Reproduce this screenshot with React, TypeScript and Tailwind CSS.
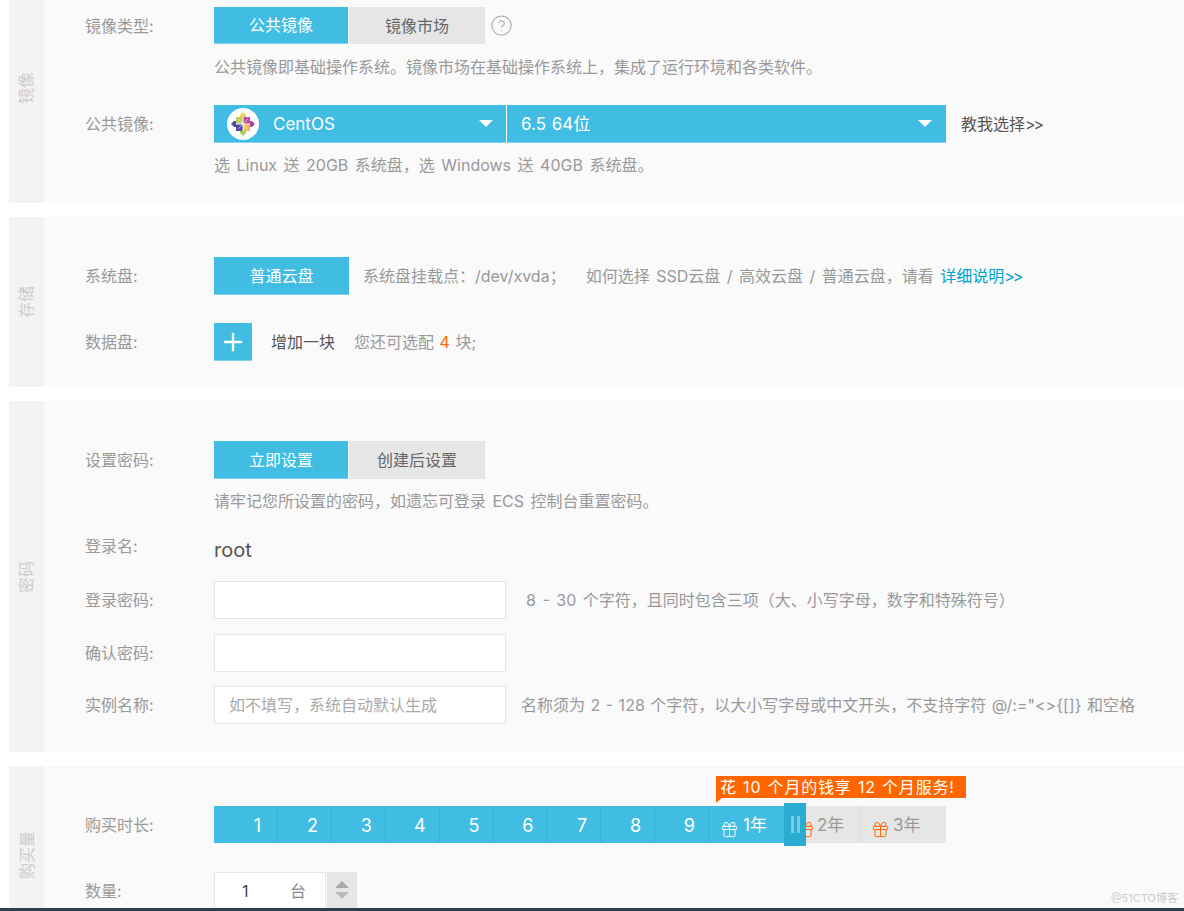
import { CircleHelp, Gift, Plus } from "lucide-react";
import type { ReactNode } from "react";

const Row = ({ label, className, children }: { label: string; className: string; children: ReactNode }) => (
  <div className={`flex items-center ${className}`}>
    <div className="w-[129px] shrink-0 text-[#999]">{label}</div>
    {children}
  </div>
);

const Hint = ({ className, children }: { className: string; children: ReactNode }) => (
  <div className={`ml-[129px] h-6 whitespace-nowrap leading-6 text-[#999] [word-spacing:2px] ${className}`}>{children}</div>
);

const Section = ({ title, tabClass, className, children }: { title: string; tabClass: string; className: string; children: ReactNode }) => (
  <section className={`flex overflow-hidden bg-[#fafafa] ${className}`}>
    <div className={`flex w-[35px] shrink-0 items-center justify-center bg-[#f3f3f3] text-[#ccc] ${tabClass}`}>
      <span className="-rotate-90 whitespace-nowrap">{title}</span>
    </div>
    <div className="min-w-0 flex-1 pl-[41px]">{children}</div>
  </section>
);

const Btn = ({ on, className, children }: { on?: boolean; className: string; children: ReactNode }) => (
  <div className={`flex items-center justify-center ${on ? "border-b border-[#7fd3ee] bg-[#41bde4] text-white" : "bg-[#e6e6e6] text-[#666]"} ${className}`}>
    {children}
  </div>
);

const Caret = () => <span className="h-0 w-0 border-x-[7px] border-t-[7px] border-x-transparent border-t-white" />;

const Arrows = () => <span className="tracking-[-2px]">&gt;&gt;</span>;

const CentosLogo = () => (
  <svg viewBox="0 0 32 32" className="h-8 w-8">
    <circle cx="16" cy="16" r="16" fill="#fff" />
    <path d="M16 4l3 3v2h-6V7z" fill="#e9d25a" />
    <path d="M28 16l-3 3h-2v-6h2z" fill="#a9479c" />
    <path d="M16 28l-3-3v-2h6v2z" fill="#a8cf55" />
    <path d="M4 16l3-3h2v6H7z" fill="#5a4aa8" />
    <rect x="9" y="9" width="6.5" height="6.5" fill="#b9cf5a" />
    <rect x="16.5" y="9" width="6.5" height="6.5" fill="#bb4c9d" />
    <rect x="9" y="16.5" width="6.5" height="6.5" fill="#4a4aa6" />
    <rect x="16.5" y="16.5" width="6.5" height="6.5" fill="#f4b757" />
    <path d="M11 11l9 10M21 11l-10 10" stroke="#fff" strokeWidth="0.8" opacity="0.7" />
  </svg>
);

const months = [1, 2, 3, 4, 5, 6, 7, 8, 9];

export default function App() {
  return (
    <div
      className="relative h-[911px] w-[1184px] overflow-hidden bg-white pl-[9px] text-[16px] [word-spacing:1px]"
      style={{ fontFamily: 'Inter, "Noto Sans CJK SC", sans-serif' }}
    >
      <Section title="镜像" tabClass="pb-[28px]" className="h-[203px]">
        <Row label="镜像类型:" className="mt-[7px] h-[37px]">
          <Btn on className="h-full w-[134px]">公共镜像</Btn>
          <Btn className="ml-[1px] h-full w-[136px]">镜像市场</Btn>
          <CircleHelp className="ml-[5px] h-[23px] w-[23px] text-[#aaa]" strokeWidth={1.1} />
        </Row>
        <Hint className="mt-[11px]">公共镜像即基础操作系统。镜像市场在基础操作系统上&#xFF0C;集成了运行环境和各类软件。</Hint>
        <Row label="公共镜像:" className="mt-[26px] h-[38px]">
          <div className="flex h-full w-[292px] items-center border-b border-[#7fd3ee] bg-[#41bde4] px-[13px] text-white">
            <CentosLogo />
            <span className="ml-[14px] mt-[2px] flex-1 text-[17px]">CentOS</span>
            <Caret />
          </div>
          <div className="ml-[1px] flex h-full w-[439px] items-center border-b border-[#7fd3ee] bg-[#41bde4] px-[14px] text-white">
            <span className="mt-[2px] flex-1 text-[17px]">6.5 64位</span>
            <Caret />
          </div>
          <span className="ml-[15px] text-[#555]">教我选择<Arrows /></span>
        </Row>
        <Hint className="mt-[10px]">选 Linux 送 20GB 系统盘&#xFF0C;选 Windows 送 40GB 系统盘。</Hint>
      </Section>

      <Section title="存储" tabClass="" className="mt-[14px] h-[170px]">
        <Row label="系统盘:" className="mt-[40px] h-[38px]">
          <Btn on className="h-full w-[135px]">普通云盘</Btn>
          <span className="ml-[14px] whitespace-nowrap text-[#999] [word-spacing:2px]">
            系统盘挂载点&#xFF1A;/dev/xvda&#xFF1B;<span className="ml-[20px]">如何选择 SSD云盘 / 高效云盘 / 普通云盘&#xFF0C;请看</span>{" "}
            <span className="text-[#00a2ca]">详细说明<Arrows /></span>
          </span>
        </Row>
        <Row label="数据盘:" className="mt-[28px] h-[38px]">
          <Btn on className="h-full w-[38px]">
            <Plus className="h-7 w-7" strokeWidth={2} />
          </Btn>
          <span className="ml-[19px] text-[#555]">增加一块</span>
          <span className="ml-[19px] text-[#999]">
            您还可选配 <span className="text-[#ff6600]">4</span> 块;
          </span>
        </Row>
      </Section>

      <Section title="密码" tabClass="" className="mt-[14px] h-[351px]">
        <Row label="设置密码:" className="mt-[40px] h-[38px]">
          <Btn on className="h-full w-[134px]">立即设置</Btn>
          <Btn className="ml-[1px] h-full w-[136px]">创建后设置</Btn>
        </Row>
        <Hint className="mt-[10px]">请牢记您所设置的密码&#xFF0C;如遗忘可登录 ECS 控制台重置密码。</Hint>
        <div className="mt-[21px] flex h-8">
          <div className="w-[129px] leading-6 text-[#999]">登录名:</div>
          <span className="text-[20px] leading-8 text-[#555]">root</span>
        </div>
        <Row label="登录密码:" className="mt-[15px] h-[38px]">
          <div className="h-full w-[292px] border border-[#e5e5e5] bg-white" />
          <span className="ml-[20px] whitespace-nowrap text-[#999] [word-spacing:2px]">8 - 30 个字符&#xFF0C;且同时包含三项&#xFF08;大、小写字母&#xFF0C;数字和特殊符号&#xFF09;</span>
        </Row>
        <Row label="确认密码:" className="mt-[15px] h-[38px]">
          <div className="h-full w-[292px] border border-[#e5e5e5] bg-white" />
        </Row>
        <Row label="实例名称:" className="mt-[14px] h-[38px]">
          <div className="flex h-full w-[292px] items-center border border-[#e5e5e5] bg-white pl-[14px] text-[#aaa]">如不填写&#xFF0C;系统自动默认生成</div>
          <span className="ml-[15px] whitespace-nowrap text-[#999]">名称须为 2 - 128 个字符&#xFF0C;以大小写字母或中文开头&#xFF0C;不支持字符 @/:="&lt;&gt;{"{[]}"} 和空格</span>
        </Row>
      </Section>

      <Section title="购买量" tabClass="pt-[36px]" className="mt-[14px] h-[142px]">
        <Row label="购买时长:" className="relative mt-[40px] h-[37px]">
          <div className="flex h-full w-[732px] text-[18px]">
            {months.map((m, i) => (
              <div key={m} className={`flex h-full items-center justify-end border-r border-[#36aed5] bg-[#41bde4] pt-[2px] text-white ${i === 0 ? "w-[64px] pr-[16px]" : "w-[53.875px] pr-[13px]"}`}>
                {m}
              </div>
            ))}
            <div className="flex h-full w-[87px] items-center bg-[#41bde4] pl-[11px] text-white">
              <Gift className="mt-[10px] h-[19px] w-[19px]" strokeWidth={1.25} />
              <span className="ml-[4px] mt-[2px] text-[17px]">1年</span>
            </div>
            <div className="flex h-full w-[63px] items-center bg-[#e6e6e6] text-[#999]">
              <Gift className="mt-[10px] h-[19px] w-[19px] text-[#f60]" strokeWidth={1.25} />
              <span className="ml-[2px] mt-[2px] text-[17px]">2年</span>
            </div>
            <div className="flex h-full flex-1 items-center border-l border-[#dcdcdc] bg-[#e6e6e6] pl-[11px] text-[#999]">
              <Gift className="mt-[10px] h-[19px] w-[19px] text-[#f60]" strokeWidth={1.25} />
              <span className="ml-[3px] mt-[2px] text-[17px]">3年</span>
            </div>
          </div>
          {/* 滑块 */}
          <div className="absolute left-[699px] top-[-3px] flex h-[43px] w-[22px] items-center justify-center gap-[3px] bg-[#2aabd2]">
            <span className="h-[17px] w-[3px] bg-[#7cc9e2]" />
            <span className="h-[17px] w-[3px] bg-[#7cc9e2]" />
          </div>
          {/* 提示 */}
          <div className="absolute left-[631px] top-[-30px] flex h-[22px] w-[250px] items-center whitespace-nowrap bg-[#ff6600] pl-[4px] tracking-[0.8px] text-white">
            花 10 个月的钱享 12 个月服务!
            <span className="absolute left-0 top-full h-0 w-0 border-r-[6px] border-t-[5px] border-r-transparent border-t-[#ff6600]" />
          </div>
        </Row>
        <Row label="数量:" className="mt-[29px] h-[38px]">
          <div className="flex h-full w-[112px] items-center border border-[#e5e5e5] bg-white">
            <span className="ml-[27px] w-[48px] text-[#444]">1</span>
            <span className="text-[#888]">台</span>
          </div>
          <div className="ml-[1px] flex h-full w-[30px] flex-col items-center gap-[4px] bg-[#e6e6e6] pt-[9px]">
            <span className="h-0 w-0 border-x-[7px] border-b-[7px] border-x-transparent border-b-[#aaa]" />
            <span className="h-0 w-0 border-x-[7px] border-t-[7px] border-x-transparent border-t-[#bbb]" />
          </div>
        </Row>
      </Section>

      <div className="absolute bottom-[3px] right-[6px] text-[11px] leading-[20px] text-[#ccc]">@51CTO博客</div>
      <div className="absolute inset-x-0 bottom-0 h-[3px] bg-[#2c3e50]" />
    </div>
  );
}
